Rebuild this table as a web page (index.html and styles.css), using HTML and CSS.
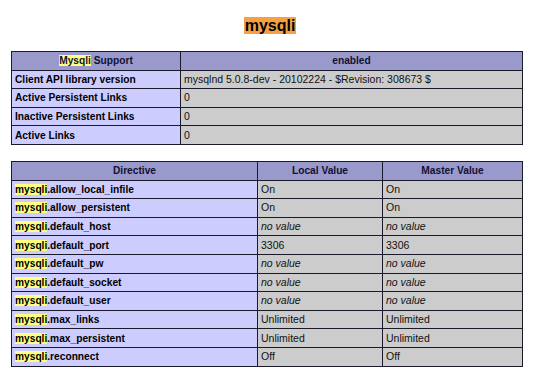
FILE: index.html
```html
<!DOCTYPE html>
<html>
<head>
<meta charset="utf-8">
<link rel="stylesheet" href="styles.css">
</head>
<body>
<h2 class="title"><span class="hl-title">mysqli</span></h2>
<table class="info t1">
  <colgroup><col class="c1a"><col></colgroup>
  <tr><th><span class="hl">Mysqli</span> Support</th><th>enabled</th></tr>
  <tr><td class="e">Client API library version</td><td class="v">mysqlnd 5.0.8-dev - 20102224 - $Revision: 308673 $</td></tr>
  <tr><td class="e">Active Persistent Links</td><td class="v">0</td></tr>
  <tr><td class="e">Inactive Persistent Links</td><td class="v">0</td></tr>
  <tr><td class="e">Active Links</td><td class="v">0</td></tr>
</table>
<table class="info t2">
  <colgroup><col class="c2a"><col class="c2b"><col></colgroup>
  <tr><th>Directive</th><th>Local Value</th><th>Master Value</th></tr>
  <tr><td class="e"><span class="hl">mysqli</span>.allow_local_infile</td><td class="v">On</td><td class="v">On</td></tr>
  <tr><td class="e"><span class="hl">mysqli</span>.allow_persistent</td><td class="v">On</td><td class="v">On</td></tr>
  <tr><td class="e"><span class="hl">mysqli</span>.default_host</td><td class="v"><i>no value</i></td><td class="v"><i>no value</i></td></tr>
  <tr><td class="e"><span class="hl">mysqli</span>.default_port</td><td class="v">3306</td><td class="v">3306</td></tr>
  <tr><td class="e"><span class="hl">mysqli</span>.default_pw</td><td class="v"><i>no value</i></td><td class="v"><i>no value</i></td></tr>
  <tr><td class="e"><span class="hl">mysqli</span>.default_socket</td><td class="v"><i>no value</i></td><td class="v"><i>no value</i></td></tr>
  <tr><td class="e"><span class="hl">mysqli</span>.default_user</td><td class="v"><i>no value</i></td><td class="v"><i>no value</i></td></tr>
  <tr><td class="e"><span class="hl">mysqli</span>.max_links</td><td class="v">Unlimited</td><td class="v">Unlimited</td></tr>
  <tr><td class="e"><span class="hl">mysqli</span>.max_persistent</td><td class="v">Unlimited</td><td class="v">Unlimited</td></tr>
  <tr><td class="e"><span class="hl">mysqli</span>.reconnect</td><td class="v">Off</td><td class="v">Off</td></tr>
</table>
</body>
</html>
```
FILE: styles.css
```css
html, body {
  margin: 0;
  padding: 0;
  background: #fff;
  font-family: "Liberation Sans", Arial, sans-serif;
  color: #000;
}
.title {
  margin: 15px 0 0;
  height: 21px;
  text-align: center;
  font-size: 16px;
  font-weight: bold;
  line-height: 21px;
}
.hl-title {
  background: #f7a043;
  padding: 0 1px;
}
.info {
  border-collapse: collapse;
  width: 512px;
  margin-left: 11px;
  table-layout: fixed;
  font-size: 10.5px;
}
.t1 { margin-top: 15px; }
.t2 { margin-top: 16px; }
.c1a { width: 169px; }
.c2a { width: 246px; }
.c2b { width: 125px; }
.info th, .info td {
  border: 1px solid #1a1a2a;
  height: 17.6px;
  padding: 0 3px;
  line-height: 13px;
  vertical-align: middle;
  white-space: nowrap;
  overflow: hidden;
}
.info th {
  background: #9999cc;
  font-weight: bold;
  font-size: 10.2px;
  text-align: center;
  color: #111133;
}
.info td.e {
  background: #ccccff;
  font-weight: bold;
  font-size: 10.2px;
  text-align: left;
}
.info td.v {
  background: #cccccc;
  text-align: left;
  color: #111;
}
.hl {
  background: #ffff80;
}
```
